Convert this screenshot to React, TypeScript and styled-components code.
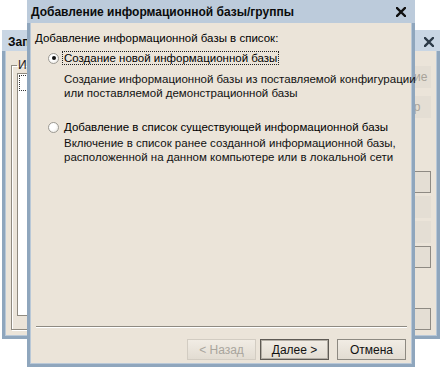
import React from 'react';
import styled, { createGlobalStyle } from 'styled-components';

const GlobalStyle = createGlobalStyle`
  html, body {
    margin: 0;
    padding: 0;
    background: #ffffff;
  }
  body {
    font-family: "Liberation Sans", Arial, sans-serif;
    font-size: 12px;
    color: #000;
  }
`;

const Desktop = styled.div`
  position: relative;
  width: 442px;
  height: 368px;
  overflow: hidden;
  background: #ffffff;
`;

const Window = styled.div<{ $left: number; $top: number; $w: number; $h: number }>`
  position: absolute;
  left: ${(p) => p.$left}px;
  top: ${(p) => p.$top}px;
  width: ${(p) => p.$w}px;
  height: ${(p) => p.$h}px;
  box-sizing: border-box;
  display: flex;
  flex-direction: column;
  background: #ebe4d9;
  border: 3px solid #8fa6bd;
  border-top-width: 0;
  box-shadow: inset 1px 0 0 #b9c8d7, inset -1px 0 0 #b9c8d7, inset 0 -1px 0 #b9c8d7;
`;

const TitleBar = styled.div<{ $active?: boolean }>`
  height: ${(p) => (p.$active ? 23 : 21)}px;
  box-sizing: border-box;
  flex: none;
  display: flex;
  align-items: center;
  justify-content: space-between;
  padding: ${(p) => (p.$active ? '0 9px 0 4px' : '2px 6px 0 6px')};
  margin: 0 -3px;
  background: ${(p) => (p.$active ? '#bccbdb' : '#c9d6e4')};
  color: #0b0b0b;
  font-size: 12px;
  font-weight: 700;
  white-space: nowrap;
  overflow: hidden;
`;

const CloseIcon = ({ color }: { color: string }) => (
  <svg width="10" height="10" viewBox="0 0 10 10">
    <path d="M1 1 L9 9 M9 1 L1 9" stroke={color} strokeWidth="2.4" strokeLinecap="square" />
  </svg>
);

/* background launcher window */

const LauncherBody = styled.div`
  flex: 1;
  display: flex;
  gap: 8px;
  padding: 7px 6px 6px 6px;
`;

const GroupBox = styled.fieldset`
  flex: 1;
  margin: 0;
  padding: 1px 6px 13px 5px;
  border: 1px solid #8f8a80;
  box-shadow: 1px 1px 0 #ffffff, inset 1px 1px 0 #ffffff;
  display: flex;
  flex-direction: column;

  legend {
    padding: 0 1px;
    margin-left: 0;
    font-size: 12px;
    color: #222;
  }
`;

const ListArea = styled.div`
  flex: 1;
  background: #ffffff;
  border: 1px solid #8f8a80;
  padding: 1px;
`;

const ListFocus = styled.div`
  height: 14px;
  border: 1px dotted #333;
`;

const SideColumn = styled.div`
  width: 100px;
  display: flex;
  flex-direction: column;
  gap: 3px;
  padding-top: 8px;
`;

const SideButton = styled.div<{ $disabled?: boolean; $gapBefore?: number }>`
  height: 22px;
  box-sizing: border-box;
  margin-top: ${(p) => p.$gapBefore ?? 0}px;
  display: flex;
  align-items: center;
  justify-content: center;
  font-size: 12px;
  color: ${(p) => (p.$disabled ? '#a8a39a' : '#222')};
  background: #e4ded4;
  border: 1px solid ${(p) => (p.$disabled ? '#e4ded4' : '#8e8a83')};
`;

/* front dialog */

const DialogBody = styled.div`
  flex: 1;
  display: flex;
  flex-direction: column;
  padding: 8px 6px 0 5px;
  font-size: 11.5px;
  white-space: nowrap;
`;

const Heading = styled.div`
  line-height: 14px;
  margin-bottom: 4px;
`;

const Option = styled.div<{ $space: number }>`
  display: flex;
  flex-direction: column;
  padding-left: 13px;
  margin-top: ${(p) => p.$space}px;
`;

const OptionRow = styled.div`
  display: flex;
  align-items: center;
  gap: 3px;
  height: 14px;
`;

const Radio = styled.span<{ $checked?: boolean }>`
  width: 11px;
  height: 11px;
  flex: none;
  box-sizing: border-box;
  border-radius: 50%;
  border: 1px solid #9c9a94;
  background: radial-gradient(circle at 35% 35%, #ffffff 40%, #e6e3dc 100%);
  display: inline-flex;
  align-items: center;
  justify-content: center;

  &::after {
    content: '';
    width: 4px;
    height: 4px;
    border-radius: 50%;
    background: ${(p) => (p.$checked ? '#111' : 'transparent')};
  }
`;

const OptionLabel = styled.span<{ $focused?: boolean }>`
  line-height: 12px;
  padding: 0 1px;
  border: 1px dotted ${(p) => (p.$focused ? '#222' : 'transparent')};
`;

const OptionText = styled.div<{ $top: number }>`
  margin-top: ${(p) => p.$top}px;
  padding-left: 16px;
  line-height: 14px;
  color: #111;
`;

const Separator = styled.div`
  height: 1px;
  margin: 0 5px 0 6px;
  background: #8e8a82;
  box-shadow: 0 1px 0 #ffffff;
`;

const ButtonRow = styled.div`
  display: flex;
  justify-content: flex-end;
  gap: 4px;
  padding: 12px 6px 4px 0;
`;

const DialogButton = styled.div<{ $variant?: 'default' | 'disabled'; $gapBefore?: number }>`
  width: 69px;
  height: 21px;
  box-sizing: border-box;
  margin-left: ${(p) => p.$gapBefore ?? 0}px;
  display: flex;
  align-items: center;
  justify-content: center;
  font-size: 12px;
  background: linear-gradient(#f1ece4, #e2dcd2);
  color: ${(p) => (p.$variant === 'disabled' ? '#a9a59d' : '#111')};
  border: 1px solid
    ${(p) => (p.$variant === 'disabled' ? '#d2ccc2' : p.$variant === 'default' ? '#5e5a54' : '#8d8981')};
  box-shadow: ${(p) => (p.$variant === 'default' ? 'inset 0 0 0 1px #b3aea5' : 'none')};
`;

export default function App() {
  return (
    <Desktop>
      <GlobalStyle />

      <Window $left={2} $top={30} $w={438} $h={309}>
        <TitleBar>
          <span>Запуск 1С:Предприятия</span>
          <CloseIcon color="#2c3a48" />
        </TitleBar>
        <LauncherBody>
          <GroupBox>
            <legend>Информационные базы</legend>
            <ListArea>
              <ListFocus />
            </ListArea>
          </GroupBox>
          <SideColumn>
            <SideButton $disabled>1С:Предприятие</SideButton>
            <SideButton $disabled $gapBefore={5}>Конфигуратор</SideButton>
            <SideButton $gapBefore={50}>Добавить...</SideButton>
            <SideButton $disabled>Изменить...</SideButton>
            <SideButton $disabled>Удалить</SideButton>
            <SideButton>Настройка...</SideButton>
            <SideButton $gapBefore={37}>Выход</SideButton>
          </SideColumn>
        </LauncherBody>
      </Window>

      <Window $left={27} $top={0} $w={388} $h={367}>
        <TitleBar $active>
          <span>Добавление информационной базы/группы</span>
          <CloseIcon color="#101010" />
        </TitleBar>
        <DialogBody>
          <Heading>Добавление информационной базы в список:</Heading>
          <Option $space={2}>
            <OptionRow>
              <Radio $checked />
              <OptionLabel $focused>Создание новой информационной базы</OptionLabel>
            </OptionRow>
            <OptionText $top={7}>
              Создание информационной базы из поставляемой конфигурации
              <br />
              или поставляемой демонстрационной базы
            </OptionText>
          </Option>
          <Option $space={20}>
            <OptionRow>
              <Radio />
              <OptionLabel>Добавление в список существующей информационной базы</OptionLabel>
            </OptionRow>
            <OptionText $top={2}>
              Включение в список ранее созданной информационной базы,
              <br />
              расположенной на данном компьютере или в локальной сети
            </OptionText>
          </Option>
        </DialogBody>
        <Separator />
        <ButtonRow>
          <DialogButton $variant="disabled">&lt; Назад</DialogButton>
          <DialogButton $variant="default">Далее &gt;</DialogButton>
          <DialogButton $gapBefore={4}>Отмена</DialogButton>
        </ButtonRow>
      </Window>
    </Desktop>
  );
}
